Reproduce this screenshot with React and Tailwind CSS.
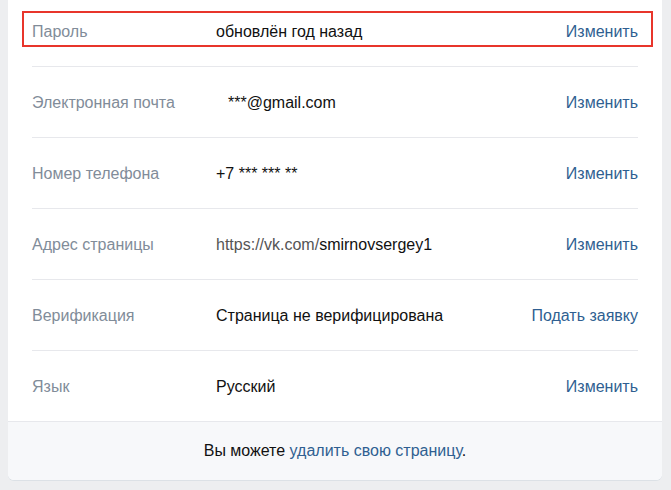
const rows = [
  { label: 'Пароль', value: 'обновлён год назад', action: 'Изменить', highlight: true },
  { label: 'Электронная почта', value: '***@gmail.com', action: 'Изменить', indent: true },
  { label: 'Номер телефона', value: '+7 *** *** **', action: 'Изменить' },
  { label: 'Адрес страницы', prefix: 'https://vk.com/', value: 'smirnovsergey1', action: 'Изменить' },
  { label: 'Верификация', value: 'Страница не верифицирована', action: 'Подать заявку' },
  { label: 'Язык', value: 'Русский', action: 'Изменить' },
]

export default function App() {
  return (
    <div className="w-[671px] h-[490px] overflow-hidden bg-[#edeef0] text-[16px] font-['Liberation_Sans',Arial,sans-serif]">
      <div className="ml-[8px] -mt-[5px] w-[654px] bg-white rounded-b-md shadow-[0_1px_0_0_#dce1e6]">
        {rows.map((r, i) => (
          <div key={r.label} className="relative px-6">
            {r.highlight && (
              <div className="absolute left-[14px] top-[16px] w-[631px] h-[36px] border-[2.5px] border-[#e8352b] pointer-events-none" />
            )}
            <div className={`flex items-center h-[71px] pt-[2px] ${i > 0 ? 'border-t border-[#e7e8ec]' : ''}`}>
              <div className="w-[184px] shrink-0 text-[#818c99]">{r.label}</div>
              <div className={`flex-1 text-[#111] ${r.indent ? 'pl-3' : ''}`}>
                {r.prefix && <span className="text-[#555]">{r.prefix}</span>}
                {r.value}
              </div>
              <a className="text-[#2f5f91] cursor-pointer">{r.action}</a>
            </div>
          </div>
        ))}
        <div className="h-[59px] flex items-center justify-center bg-[#f7f8fa] border-t border-[#e7e8ec] rounded-b-md text-[#111]">
          <span>
            Вы можете <a className="text-[#2f5f91] cursor-pointer">удалить свою страницу</a>.
          </span>
        </div>
      </div>
    </div>
  )
}
